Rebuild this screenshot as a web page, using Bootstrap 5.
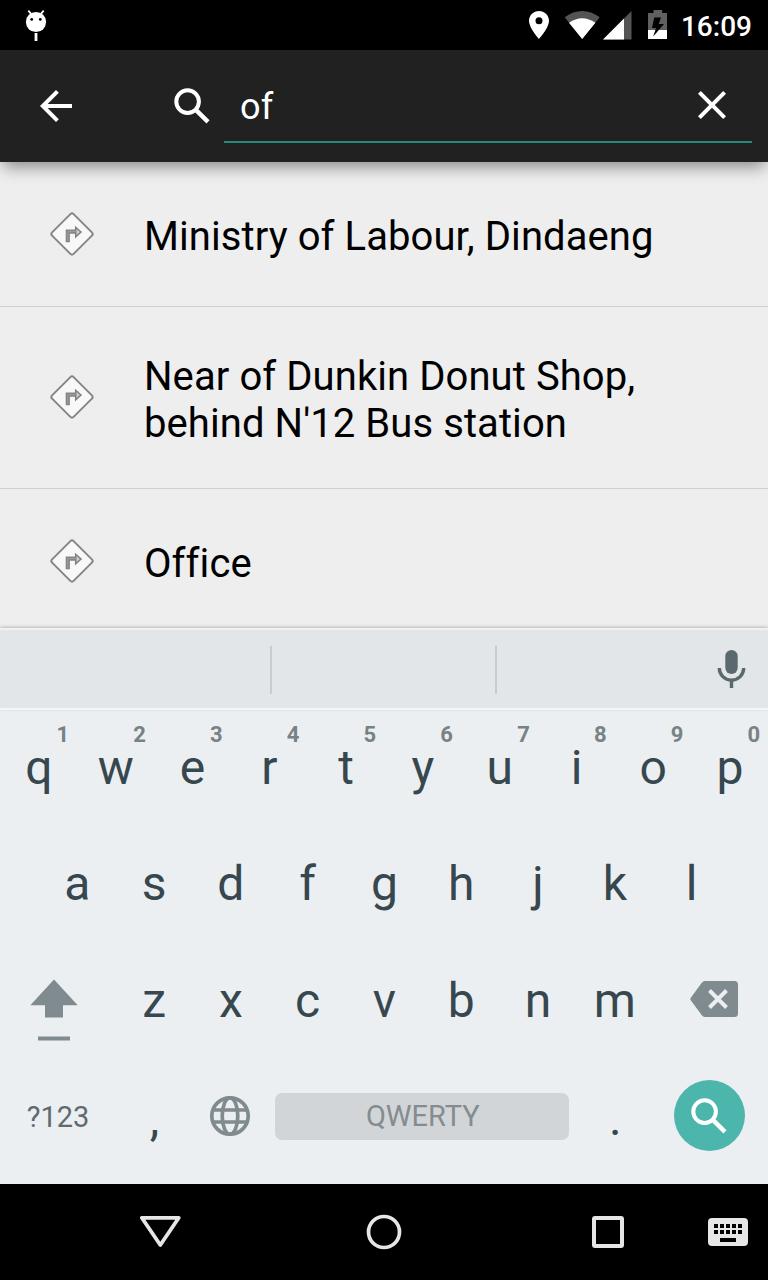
<!DOCTYPE html>
<html lang="en">
<head>
<meta charset="utf-8">
<meta name="viewport" content="width=device-width, initial-scale=1">
<title>Search</title>
<link rel="stylesheet" href="https://cdn.jsdelivr.net/npm/bootstrap@5.3.0/dist/css/bootstrap.min.css">
<style>
  body { font-family: Roboto, "Noto Sans", sans-serif; background: #eee; color: #000; }
  svg { display: block; flex: none; }
  .phone { width: 768px; height: 1280px; }
  .statusbar { height: 50px; background: #000; padding: 0 16px 0 24px; }
  .clock { font-size: 28px; font-weight: 500; line-height: 33px; margin: 2px 0 0 13px; }
  .appbar { height: 112px; background: #212121; padding: 0 16px 0 32px; box-shadow: 0 8px 15px -3px rgba(0,0,0,.42); z-index: 2; }
  .field { width: 528px; height: 61px; border-bottom: 2px solid #2b887c; margin: 0 0 19px 8px; padding: 0 16px 13px; }
  .query { font-size: 36px; line-height: 42px; color: #fff; margin-top: 4px; letter-spacing: .3px; }
  .results { height: 466px; background: #eee; }
  .result { min-height: 144px; padding: 0 72px 1px 50px; }
  .result + .result { border-top: 1px solid #cfcfcf; }
  .result.two { min-height: 182px; padding-bottom: 2px; }
  .result.last { min-height: 145px; }
  .label { font-size: 40px; line-height: 47px; padding-top: 6px; margin-left: 50px; white-space: nowrap; letter-spacing: .08px; }
  .strip { height: 82px; background: #e3e6e8; border-top: 2px solid #f0f1f2; border-bottom: 2px solid #f4f6f7; box-shadow: 0 -1px 3px rgba(0,0,0,.22); z-index: 1; padding-right: 22px; }
  .slot { height: 48px; width: 225px; border-right: 2px solid #c8ccce; margin-top: 2px; }
  .slot.first { width: 272px; }
  .keys { height: 474px; background: #eceff1; color: #37474f; }
  .krow { height: 117px; }
  .krow.top { height: 114px; padding-bottom: 1px; }
  .key { width: 76.8px; font-size: 48px; line-height: 56px; padding: 2px 0 0 1px; }
  .key.wide { width: 115.2px; }
  .key.space { width: 307.2px; padding: 0; }
  .key.glyph { padding: 0 0 2px; }
  .key.shift { padding: 0 8px 2px 0; }
  .key.erase { padding: 0 0 2px 8px; }
  .key.enter { padding: 0 2px 2px 0; }
  .key.punct { padding: 4px 0 0 2px; }
  .hint { left: 62.7px; top: -16px; transform: translateX(-50%); font-size: 22px; font-weight: 700; line-height: 26px; color: #788285; }
  .sym { font-size: 29px; line-height: 34px; color: #5f6b70; margin-top: -2px; }
  .spacebar { width: 294px; height: 47px; border-radius: 7px; background: #d1d5d8; color: #848c90; font-size: 29px; line-height: 46px; padding-left: 1px; }
  .go { width: 71px; height: 71px; background: #4db6ac; }
  .navkeys { height: 96px; background: #000; padding-left: 136px; }
</style>
</head>
<body>
<svg width="0" height="0" class="position-absolute" aria-hidden="true">
  <symbol id="search" viewBox="0 0 48 48"><g fill="none" stroke="#fff"><circle cx="19.6" cy="19.6" r="11.3" stroke-width="4"/><path d="M28.6 28.6 40 39.9" stroke-width="4.4"/></g></symbol>
  <symbol id="turn" viewBox="0 0 44 44"><path d="M20.4 2.100Q22 .5 23.6 2.100L41.900 20.4Q43.500 22 41.900 23.6L23.6 41.900Q22 43.500 20.4 41.900L2.100 23.6Q.5 22 2.100 20.4Z" fill="#f8f8f8" stroke="#858585" stroke-width="2"/><path d="M17.8 30.300V19.6H26" fill="none" stroke="#858585" stroke-width="4.2"/><path d="M25.7 15.3V24.8L31 20Z" fill="#ccc" stroke="#808080" stroke-width="1.5"/><path d="M17.8 29V19.6H27" fill="none" stroke="#a0a0a0" stroke-width="1"/></symbol>
</svg>
<div class="phone d-flex flex-column overflow-hidden">
  <header class="statusbar d-flex align-items-center text-white">
    <svg width="24" height="50" viewBox="24 0 24 50"><circle cx="36" cy="22" r="10.1" fill="#fff"/><path d="m28.3 10.7 3 3.5M43.7 10.7l-3 3.5" stroke="#fff" stroke-width="1.8"/><path d="M36 33v8" stroke="#fff" stroke-width="2.8"/><circle cx="31.7" cy="19.4" r="1.4"/><circle cx="40.3" cy="19.4" r="1.4"/></svg>
    <svg class="ms-auto" width="140" height="50" viewBox="528 0 140 50">
      <path fill="#fff" fill-rule="evenodd" d="M539 11c-5.5 0-10 4.4-10 9.8C529 28 539 39 539 39s10-11 10-18.200C549 15.400 544.500 11 539 11Zm0 13.300a3.500 3.500 0 1 1 0-7 3.500 3.500 0 0 1 0 7Z"/>
      <path fill="#545454" d="M582.200 39 564.700 17.200Q582.200 4.800 599.700 17.200Z"/>
      <path fill="#fff" d="M582.200 39 569 22.800Q582.200 13.500 595.400 22.800Z"/>
      <path fill="#545454" d="M603 39.500 631.500 11V39.500Z"/><path fill="#fff" d="M603 39.500 624 18.500V39.500Z"/>
      <path fill="#606060" d="M653.500 10h8.700v3H667v17h-19V13h5.500Z"/><path fill="#fff" d="M648 30h19v9h-19Z"/>
      <path fill="#000" d="M654.200 17.500h6.800L658.700 24H664L653.200 36.500 656 28h-4Z"/>
    </svg>
    <span class="clock">16:09</span>
  </header>
  <div class="appbar d-flex align-items-center position-relative">
    <svg width="48" height="48" viewBox="0 0 24 24" fill="#fff"><path d="M20 11H7.830l5.590-5.590L12 4l-8 8 8 8 1.410-1.410L7.830 13H20v-2z"/></svg>
    <svg class="ms-auto" width="48" height="48"><use href="#search"/></svg>
    <div class="field d-flex align-items-center justify-content-between align-self-end">
      <span class="query">of</span>
      <svg width="48" height="48" viewBox="0 0 24 24" fill="#fff"><path d="M19 6.410 17.590 5 12 10.590 6.410 5 5 6.410 10.590 12 5 17.590 6.410 19 12 13.410 17.590 19 19 17.590 13.410 12z"/></svg>
    </div>
  </div>
  <main class="results flex-shrink-0 overflow-hidden">
    <div class="result d-flex align-items-center"><svg width="44" height="44"><use href="#turn"/></svg><div class="label">Ministry of Labour, Dindaeng</div></div>
    <div class="result two d-flex align-items-center"><svg width="44" height="44"><use href="#turn"/></svg><div class="label">Near of Dunkin Donut Shop,<br>behind N'12 Bus station</div></div>
    <div class="result last d-flex align-items-center"><svg width="44" height="44"><use href="#turn"/></svg><div class="label">Office</div></div>
  </main>
  <div class="strip d-flex align-items-center position-relative flex-shrink-0">
    <div class="slot first"></div><div class="slot"></div>
    <svg class="ms-auto" width="30" height="40" viewBox="716 649 30 40"><rect x="725.300" y="650" width="12.400" height="24" rx="6.200" fill="#5a696f"/><path d="M719.300 668a12.200 12.200 0 0 0 24.400 0M731.500 680v8" fill="none" stroke="#5a696f" stroke-width="3.400"/></svg>
  </div>
  <section class="keys text-center flex-shrink-0">
    <div class="krow top d-flex align-items-center">
      <div class="key position-relative">q<span class="hint position-absolute">1</span></div>
      <div class="key position-relative">w<span class="hint position-absolute">2</span></div>
      <div class="key position-relative">e<span class="hint position-absolute">3</span></div>
      <div class="key position-relative">r<span class="hint position-absolute">4</span></div>
      <div class="key position-relative">t<span class="hint position-absolute">5</span></div>
      <div class="key position-relative">y<span class="hint position-absolute">6</span></div>
      <div class="key position-relative">u<span class="hint position-absolute">7</span></div>
      <div class="key position-relative">i<span class="hint position-absolute">8</span></div>
      <div class="key position-relative">o<span class="hint position-absolute">9</span></div>
      <div class="key position-relative">p<span class="hint position-absolute">0</span></div>
    </div>
    <div class="krow d-flex align-items-center justify-content-center">
      <div class="key">a</div><div class="key">s</div><div class="key">d</div><div class="key">f</div><div class="key">g</div><div class="key">h</div><div class="key">j</div><div class="key">k</div><div class="key">l</div>
    </div>
    <div class="krow d-flex align-items-center">
      <div class="key wide shift d-flex justify-content-center"><svg width="48" height="84" viewBox="30 957.500 48 84" fill="#808b90"><path d="M54 980 77.700 1005.700H63V1018H45V1005.700H30.300Z"/><path d="M38 1037h32v4H38Z"/></svg></div>
      <div class="key">z</div><div class="key">x</div><div class="key">c</div><div class="key">v</div><div class="key">b</div><div class="key">n</div><div class="key">m</div>
      <div class="key wide erase d-flex justify-content-center"><svg width="48" height="36" viewBox="0 0 48 36"><path d="M15 0H44.500Q48 0 48 3.500V32.500Q48 36 44.500 36H15Q13 36 11.800 34.300L.6 19Q0 18 .6 17L11.800 1.700Q13 0 15 0Z" fill="#808b90"/><path d="m19.500 9.500 17 17M36.500 9.500l-17 17" stroke="#eceff1" stroke-width="3.900"/></svg></div>
    </div>
    <div class="krow d-flex align-items-center">
      <div class="key wide"><div class="sym">?123</div></div>
      <div class="key punct">,</div>
      <div class="key glyph d-flex justify-content-center"><svg width="42" height="42" viewBox="-21 -21 42 42" fill="none" stroke="#808b90" stroke-width="3.700"><circle r="18.200"/><ellipse rx="7.800" ry="18.200"/><path d="M-17.500-6h35M-17.500 6h35"/></svg></div>
      <div class="key space d-flex justify-content-center"><div class="spacebar">QWERTY</div></div>
      <div class="key punct">.</div>
      <div class="key wide enter d-flex justify-content-center"><div class="go rounded-circle d-flex align-items-center justify-content-center"><svg width="48" height="48"><use href="#search"/></svg></div></div>
    </div>
  </section>
  <nav class="navkeys d-flex align-items-center flex-shrink-0">
    <svg width="48" height="48" viewBox="136 1208 48 48"><path d="M141.800 1217.800H178.800L160.300 1245Z" fill="none" stroke="#e6e6e6" stroke-width="3.800" stroke-linejoin="round"/></svg>
    <svg width="224" height="48" viewBox="184 1208 224 48"><circle cx="384" cy="1232" r="15.500" fill="none" stroke="#e6e6e6" stroke-width="3.700"/></svg>
    <svg width="224" height="48" viewBox="408 1208 224 48"><rect x="594" y="1218" width="28" height="28" rx="1" fill="none" stroke="#e6e6e6" stroke-width="4"/></svg>
    <svg width="116" height="48" viewBox="632 1208 116 48"><rect x="708" y="1218" width="40" height="28" rx="4" fill="#e6e6e6"/><path d="M714 1226h28M714 1232h28" stroke="#000" stroke-width="4" stroke-dasharray="4 2"/><path d="M720 1238h16v4h-16Z"/></svg>
  </nav>
</div>
<script src="https://cdn.jsdelivr.net/npm/bootstrap@5.3.0/dist/js/bootstrap.bundle.min.js"></script>
</body>
</html>
